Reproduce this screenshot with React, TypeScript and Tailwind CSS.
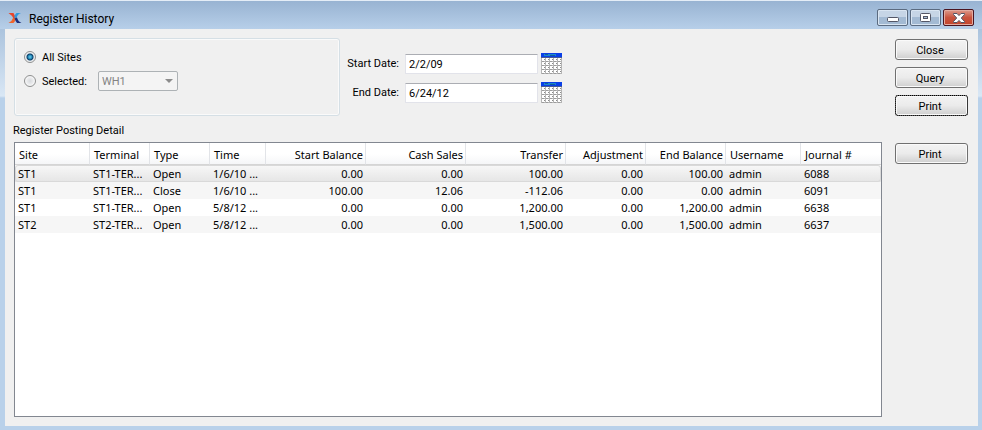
import React, { useState } from 'react';

type Column = { title: string; width: string; numeric?: boolean };

const columns: Column[] = [
  { title: 'Site', width: 'w-[75px]' },
  { title: 'Terminal', width: 'w-[60px]' },
  { title: 'Type', width: 'w-[60px]' },
  { title: 'Time', width: 'w-[56px]' },
  { title: 'Start Balance', width: 'w-[100px]', numeric: true },
  { title: 'Cash Sales', width: 'w-[100px]', numeric: true },
  { title: 'Transfer', width: 'w-[100px]', numeric: true },
  { title: 'Adjustment', width: 'w-[80px]', numeric: true },
  { title: 'End Balance', width: 'w-[80px]', numeric: true },
  { title: 'Username', width: 'w-[75px]' },
  { title: 'Journal #', width: '' },
];

const rows: string[][] = [
  ['ST1', 'ST1-TER...', 'Open', '1/6/10 ...', '0.00', '0.00', '100.00', '0.00', '100.00', 'admin', '6088'],
  ['ST1', 'ST1-TER...', 'Close', '1/6/10 ...', '100.00', '12.06', '-112.06', '0.00', '0.00', 'admin', '6091'],
  ['ST1', 'ST1-TER...', 'Open', '5/8/12 ...', '0.00', '0.00', '1,200.00', '0.00', '1,200.00', 'admin', '6638'],
  ['ST2', 'ST2-TER...', 'Open', '5/8/12 ...', '0.00', '0.00', '1,500.00', '0.00', '1,500.00', 'admin', '6637'],
];

function AppLogo() {
  return (
    <svg width="14" height="12" viewBox="0 0 14 12" aria-hidden="true">
      <path d="M0.500 1 H5.500 Q6.500 3.500 8 5.500 L6 7.500 Q4 3 0.500 1Z" fill="#e8452a" />
      <path d="M0.500 11 Q4 9.500 5 6 L8 5.500 Q7.500 9.500 5.500 11Z" fill="#f0642c" />
      <path d="M13 1 Q9.500 2 8.500 6 L6 5.500 Q6.500 2.500 8.500 1Z" fill="#2f9be0" />
      <path d="M6.500 6.500 L9 5.500 Q10 9.500 13.500 11 H9 Q7.500 9 6.500 6.500Z" fill="#1d2f7c" />
    </svg>
  );
}

function CalendarIcon() {
  return (
    <svg width="21" height="21" viewBox="0 0 21 21" aria-hidden="true" shapeRendering="crispEdges">
      <rect width="21" height="21" fill="#b4b4b4" />
      <rect width="21" height="4" fill="#0a3fe8" />
      <rect x="3" y="1" width="12" height="2" fill="#1c86cc" />
      <rect x="4" y="1" width="3" height="1" fill="#125a9c" />
      <rect x="9" y="2" width="5" height="1" fill="#125a9c" />
      <rect y="4" width="21" height="1" fill="#4a5c90" />
      {[5, 9, 13, 17].map((y) =>
        [0, 4, 8, 12, 16].map((x) => (
          <g key={`${x}-${y}`}>
            <rect x={x + 1} y={y} width="3" height="3" fill="#ffffff" />
            <rect x={x + 3} y={y + 1} width="1" height="1" fill="#8a8a8a" />
            <rect x={x + 1} y={y + 3} width="2" height="1" fill="#9c9c9c" />
          </g>
        )),
      )}
    </svg>
  );
}

function PushButton({ label, focused = false }: { label: string; focused?: boolean }) {
  return (
    <button
      type="button"
      className={`h-[21px] w-full rounded-[3px] border border-[#707070] bg-linear-to-b from-[#f3f3f3] from-0% via-[#ebebeb] via-50% to-[#cfcfcf] pt-px pr-[3px] text-center leading-[19px] shadow-[inset_0_0_0_1px_#fafafa] ${
        focused ? 'outline-1 -outline-offset-1 outline-dotted outline-black' : ''
      }`}
    >
      {label}
    </button>
  );
}

function DateField({ id, label, initial }: { id: string; label: string; initial: string }) {
  const [value, setValue] = useState(initial);
  return (
    <div className="flex h-[21px] items-center">
      <label htmlFor={id} className="w-[59px] pt-0.5 text-right whitespace-nowrap">
        {label}
      </label>
      <input
        id={id}
        type="text"
        value={value}
        onChange={(e) => setValue(e.target.value)}
        className="ml-1.5 h-[20px] w-[133px] rounded-[1px] border border-[#e2e3ea] border-t-[#abadb3] bg-white px-[3px] pt-0.5 leading-4 outline-none"
      />
      <button type="button" aria-label={`Choose ${label}`} className="ml-[3px]">
        <CalendarIcon />
      </button>
    </div>
  );
}

const radioClass =
  'size-3 shrink-0 appearance-none rounded-full border border-[#8e8f8f] bg-[radial-gradient(circle,#d6d9dc_0,#e9eaec_3px,#fafafa_5px)] checked:bg-[radial-gradient(circle_at_5px_5px,#6fd0f0_0,#2286b4_2px,#0b3c66_3px,#e4e8ec_4px,#f6f6f6_5px)]';

export default function App() {
  const [scope, setScope] = useState('all');
  return (
    <div className="flex min-h-screen flex-col bg-linear-to-b from-[#98b4d3] from-0% via-[#d9e7f5] via-[96px] to-[#b9d1ea] to-[98px] pr-1 pb-1 pl-[5px] font-['Roboto','Noto_Sans',sans-serif] text-[11px] text-black">
      <header className="-mr-1 -ml-[5px] flex h-[29px] shrink-0 items-start border-t border-[#e4edf7] bg-linear-to-b from-[#98b3d2] to-[#b7cfe9] pr-2 pl-2">
        <div className="flex h-[34px] items-center">
          <AppLogo />
          <h1 className="ml-[7px] pt-0.5 text-[12px]">Register History</h1>
        </div>
        <div className="mt-2 ml-auto flex gap-[2px]">
          <button
            type="button"
            aria-label="Minimize"
            className="flex h-[17px] w-[31px] items-center justify-center rounded-[2px] border border-[#5b6b80] bg-linear-to-b from-[#c6d5e6] from-45% to-[#a3bad3] to-50% shadow-[inset_0_0_0_1px_#d9e5f2]"
          >
            <svg width="12" height="5" viewBox="0 0 12 5" className="mt-1" aria-hidden="true">
              <rect x="0.5" y="0.5" width="11" height="4" rx="1" fill="#fff" stroke="#535666" />
            </svg>
          </button>
          <button
            type="button"
            aria-label="Maximize"
            className="flex h-[17px] w-[31px] items-center justify-center rounded-[2px] border border-[#5b6b80] bg-linear-to-b from-[#c6d5e6] from-45% to-[#a3bad3] to-50% shadow-[inset_0_0_0_1px_#d9e5f2]"
          >
            <svg width="11" height="9" viewBox="0 0 11 9" aria-hidden="true">
              <rect x="0.5" y="0.5" width="10" height="8" rx="1" fill="#fff" stroke="#535666" />
              <rect x="3.5" y="3.5" width="4" height="2" fill="#a9bfd8" stroke="#535666" />
            </svg>
          </button>
          <button
            type="button"
            aria-label="Close window"
            className="flex h-[17px] w-[31px] items-center justify-center rounded-[2px] border border-[#4a1520] bg-linear-to-b from-[#dc9a8c] from-0% via-[#c9543f] via-50% to-[#c4452c] shadow-[inset_0_0_0_1px_#e3aba0]"
          >
            <svg width="12" height="10" viewBox="0 0 12 10" aria-hidden="true">
              <path
                d="M0.5 0.5 H4 L6 2.600 L8 0.500 H11.500 V1.500 L8.300 5 L11.500 8.500 V9.500 H8 L6 7.400 L4 9.500 H0.500 V8.500 L3.700 5 L0.500 1.500Z"
                fill="#fff"
                stroke="#535666"
              />
            </svg>
          </button>
        </div>
      </header>

      <main className="flex flex-1 gap-[13px] bg-[#f0f0f0] py-[9px] pr-[10px] pl-[9px]">
        <div className="flex min-w-0 flex-1 flex-col">
          <div className="flex items-start">
            <fieldset className="h-[78px] w-[326px] rounded-[3px] border border-[#d5dfe5] px-[9px] pt-[9px] shadow-[inset_0_0_0_1px_#fafafa]">
              <div className="flex h-[18px] items-center gap-[6px]">
                <input
                  id="all-sites"
                  type="radio"
                  name="scope"
                  checked={scope === 'all'}
                  onChange={() => setScope('all')}
                  className={radioClass}
                />
                <label htmlFor="all-sites" className="pt-0.5">
                  All Sites
                </label>
              </div>
              <div className="mt-[5px] flex h-[20px] items-center">
                <input
                  id="selected-site"
                  type="radio"
                  name="scope"
                  checked={scope === 'selected'}
                  onChange={() => setScope('selected')}
                  className={radioClass}
                />
                <label htmlFor="selected-site" className="w-[55px] pt-0.5 pl-[6px] whitespace-nowrap">
                  Selected:
                </label>
                <div className="relative ml-[7px] h-[20px] w-[80px]">
                  <select
                    aria-label="Site"
                    disabled={scope === 'all'}
                    className="h-full w-full appearance-none rounded-[2px] border border-[#707070] bg-[#f4f4f4] pt-px pl-[3px] leading-4 disabled:border-[#adb2b5] disabled:text-[#838383] disabled:opacity-100"
                  >
                    <option>WH1</option>
                  </select>
                  <svg
                    width="8"
                    height="4"
                    viewBox="0 0 8 4"
                    className="pointer-events-none absolute top-2 right-[5px]"
                    aria-hidden="true"
                  >
                    <path d="M0 0 H8 L4 4Z" fill="#8c8c8c" />
                  </svg>
                </div>
              </div>
            </fieldset>
            <div className="mt-[15px] flex flex-col gap-2">
              <DateField id="start-date" label="Start Date:" initial="2/2/09" />
              <DateField id="end-date" label="End Date:" initial="6/24/12" />
            </div>
          </div>

          <h2 className="-ml-px mt-1 h-[22px] leading-[22px]">Register Posting Detail</h2>

          <div className="flex-1 border border-[#828790] bg-white">
            <table className="w-full table-fixed border-separate border-spacing-0 font-['Noto_Sans','Open_Sans',sans-serif]">
              <thead>
                <tr className="h-[22px] bg-linear-to-b from-white from-50% to-[#f4f5f7]">
                  {columns.map((c) => (
                    <th
                      key={c.title}
                      scope="col"
                      className={`${c.width} border-r border-b border-r-[#e2e4e8] border-b-[#d5d5d5] p-0 pt-0.5 leading-[19px] font-normal whitespace-nowrap last:border-r-0 ${
                        c.numeric ? 'pr-[2px] text-right' : 'pl-1 text-left'
                      }`}
                    >
                      {c.title}
                    </th>
                  ))}
                </tr>
              </thead>
              <tbody>
                {rows.map((r, i) => (
                  <tr
                    key={r[10]}
                    className={`h-[17px] ${
                      i === 0
                        ? 'rounded-[3px] bg-linear-to-b from-[#f8f8f8] to-[#e5e5e5] outline-1 -outline-offset-1 outline-[#d9d9d9]'
                        : 'even:bg-[#f6f6f6]'
                    }`}
                  >
                    {r.map((v, j) => (
                      <td
                        key={columns[j].title}
                        className={`p-0 leading-[17px] whitespace-nowrap ${
                          columns[j].numeric ? 'pr-[3px] text-right' : 'pl-[3px] text-left'
                        }`}
                      >
                        {v}
                      </td>
                    ))}
                  </tr>
                ))}
              </tbody>
            </table>
          </div>
        </div>

        <div className="flex w-[73px] shrink-0 flex-col gap-[7px] pt-px">
          <PushButton label="Close" />
          <PushButton label="Query" />
          <PushButton label="Print" focused />
          <div className="mt-5">
            <PushButton label="Print" />
          </div>
        </div>
      </main>
    </div>
  );
}
